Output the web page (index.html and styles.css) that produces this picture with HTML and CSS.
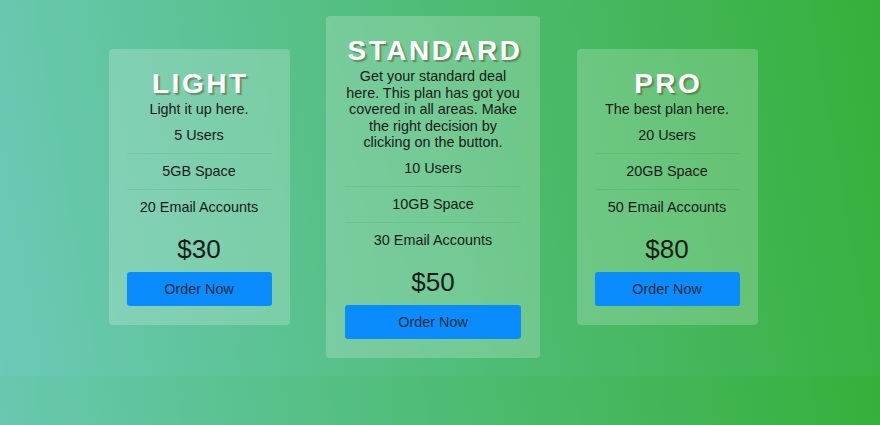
FILE: index.html
```html
<!DOCTYPE html>
<html lang="en">
<head>
<meta charset="utf-8">
<title>Pricing</title>
<link rel="stylesheet" href="styles.css">
</head>
<body>
<div class="plans">
  <div class="card card-small">
    <h2 class="title">LIGHT</h2>
    <p class="desc">Light it up here.</p>
    <ul class="features">
      <li>5 Users</li>
      <li>5GB Space</li>
      <li>20 Email Accounts</li>
    </ul>
    <div class="price">$30</div>
    <button class="order">Order Now</button>
  </div>
  <div class="card card-big">
    <h2 class="title">STANDARD</h2>
    <p class="desc">Get your standard deal here. This plan has got you covered in all areas. Make the right decision by clicking on the button.</p>
    <ul class="features">
      <li>10 Users</li>
      <li>10GB Space</li>
      <li>30 Email Accounts</li>
    </ul>
    <div class="price">$50</div>
    <button class="order">Order Now</button>
  </div>
  <div class="card card-small">
    <h2 class="title">PRO</h2>
    <p class="desc">The best plan here.</p>
    <ul class="features">
      <li>20 Users</li>
      <li>20GB Space</li>
      <li>50 Email Accounts</li>
    </ul>
    <div class="price">$80</div>
    <button class="order">Order Now</button>
  </div>
</div>
</body>
</html>
```

FILE: styles.css
```css
body {
  margin: 8px;
  font-family: "Liberation Sans", Arial, sans-serif;
  font-size: 14.4px;
  line-height: 16.5px;
  color: #1a1a1a;
  background: linear-gradient(80deg, #6bcab8, #36b03a);
}

.plans {
  display: flex;
  justify-content: center;
  align-items: center;
  gap: 36.5px;
  padding: 8px 14px 10px 0;
}

.card {
  box-sizing: border-box;
  background: rgba(255, 255, 255, 0.2);
  border-radius: 4px;
  padding: 19px 18px 19px;
  text-align: center;
}

.card-small {
  width: 181px;
}

.card-big {
  width: 214px;
  padding-left: 19px;
  padding-right: 19px;
}

.title {
  margin: 0 0 1px;
  padding-left: 2.5px;
  font-size: 28px;
  line-height: 32px;
  font-weight: 700;
  letter-spacing: 2.5px;
  color: #fff;
  text-shadow: 2px 2px 1px rgba(70, 70, 30, 0.45);
}

.desc {
  margin: 0;
}

.features {
  list-style: none;
  margin: 0;
  padding: 0;
}

.features li {
  padding: 9.25px 0;
  border-bottom: 1px solid rgba(0, 90, 0, 0.08);
}

.features li:last-child {
  border-bottom: none;
}

.price {
  margin: 9.5px 0 8px;
  font-size: 26px;
  line-height: 30px;
}

.order {
  display: block;
  width: 100%;
  padding: 9px 0;
  border: none;
  border-radius: 3px;
  background: #0a8cff;
  color: #1c2a3a;
  font-family: inherit;
  font-size: 14.4px;
  line-height: 16px;
}
```
